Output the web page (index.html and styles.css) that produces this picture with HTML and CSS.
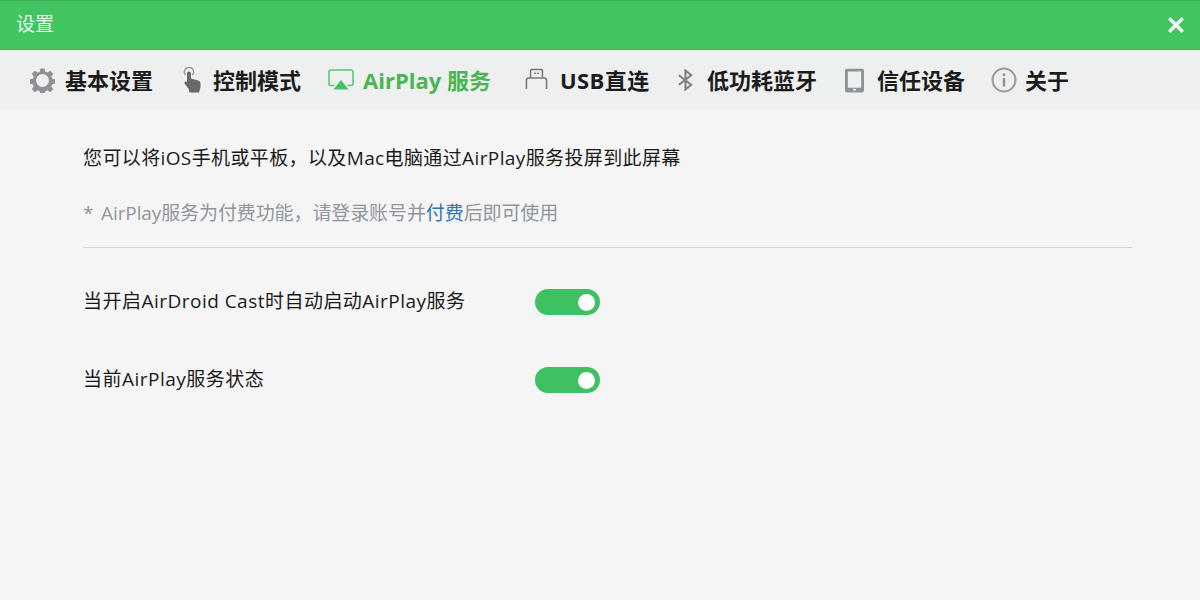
FILE: index.html
```html
<!DOCTYPE html>
<html lang="zh-CN">
<head>
<meta charset="utf-8">
<title>设置</title>
<link rel="stylesheet" href="styles.css">
</head>
<body>
<div class="window">
  <header class="titlebar">
    <span class="title">设置</span>
    <svg class="close" viewBox="0 0 16 16"><path d="M2 2L14 14M14 2L2 14"/></svg>
  </header>
  <nav class="tabs">
    <a class="tab tab-basic">
      <svg class="icon icon-gear" viewBox="0 0 26 26"><path class="fill-grey" fill-rule="evenodd" d="M10.800 .5h4.400l.7 3.400 2.100.9 3-1.900 3.100 3.100-1.900 3 .9 2.100 3.400.7v4.400l-3.400.7-.9 2.100 1.900 3-3.100 3.100-3-1.900-2.100.9-.7 3.400h-4.400l-.7-3.400-2.100-.9-3 1.900-3.100-3.100 1.900-3-.9-2.100-3.400-.7v-4.400l3.400-.7.9-2.100-1.900-3 3.100-3.100 3 1.900 2.100-.9zM13 6.300a6.700 6.700 0 1 0 0 13.400a6.700 6.700 0 0 0 0-13.400z"/></svg>
      <span>基本设置</span>
    </a>
    <a class="tab tab-control">
      <svg class="icon icon-hand" viewBox="0 0 20 26"><path class="stroke-soft" d="M3.600 8a4.600 4.600 0 1 1 6.800 0"/><path class="fill-dark" d="M5 6.500a2 2 0 0 1 4 0v5l6.500 1.800c1.900.5 3 1.700 3 3.500v3.700l-1.500 5H7.500l-1-3.800-3.800-5c-.9-1.400.8-2.900 2-1.800l.3.300z"/></svg>
      <span>控制模式</span>
    </a>
    <a class="tab tab-airplay active">
      <svg class="icon icon-airplay" viewBox="0 0 26 22"><path class="stroke-green" d="M6.500 16.500H3a2 2 0 0 1-2-2V3a2 2 0 0 1 2-2h20a2 2 0 0 1 2 2v11.500a2 2 0 0 1-2 2h-3.500"/><path class="fill-green" d="M13 11l7.500 9.500h-15z"/></svg>
      <span>AirPlay 服务</span>
    </a>
    <a class="tab tab-usb">
      <svg class="icon icon-usb" viewBox="0 0 24 22"><path class="stroke-thin" d="M1.500 21.500V12.500q0-2.500 2.500-2.500h16q2.500 0 2.500 2.500v9M5.800 10V2q0-1 1-1h10.400q1 0 1 1v8"/><path class="stroke-thin" d="M9.500 5h1.800M12.700 5h1.800"/></svg>
      <span>USB直连</span>
    </a>
    <a class="tab tab-bt">
      <svg class="icon icon-bt" viewBox="0 0 18 22"><path class="stroke-grey" d="M2 6l13 10-6 5V1l6 5L2 16"/></svg>
      <span>低功耗蓝牙</span>
    </a>
    <a class="tab tab-device">
      <svg class="icon icon-tablet" viewBox="0 0 20 25"><path class="fill-slate" fill-rule="evenodd" d="M2 0h16a2 2 0 0 1 2 2v21a2 2 0 0 1-2 2H2a2 2 0 0 1-2-2V2a2 2 0 0 1 2-2zM3 3v17h14V3zM8.500 21.200v1.800h3v-1.800z"/></svg>
      <span>信任设备</span>
    </a>
    <a class="tab tab-about">
      <svg class="icon icon-info" viewBox="0 0 26 26"><circle class="stroke-ring" cx="13" cy="13" r="11.500"/><circle class="dot" cx="13" cy="7.800" r="1.500"/><path class="fill-slate" d="M11.800 11h2.400v8.500h-2.400z"/></svg>
      <span>关于</span>
    </a>
  </nav>
  <main class="content">
    <p class="intro">您可以将iOS手机或平板，以及Mac电脑通过AirPlay服务投屏到此屏幕</p>
    <p class="note">*&nbsp; AirPlay服务为付费功能，请登录账号并<a class="link">付费</a>后即可使用</p>
    <hr class="divider">
    <div class="row row-first">
      <span class="label">当开启AirDroid Cast时自动启动AirPlay服务</span>
      <span class="switch"><span class="knob"></span></span>
    </div>
    <div class="row">
      <span class="label">当前AirPlay服务状态</span>
      <span class="switch"><span class="knob"></span></span>
    </div>
  </main>
</div>
</body>
</html>
```
FILE: styles.css
```css
* { box-sizing: border-box; }
html, body { margin: 0; padding: 0; }
body {
  width: 1200px;
  height: 600px;
  overflow: hidden;
  font-family: "Open Sans", "Noto Sans CJK SC", sans-serif;
  background: #f5f5f5;
}
.window { display: flex; flex-direction: column; height: 600px; }

.titlebar {
  height: 50px;
  flex: none;
  display: flex;
  align-items: center;
  justify-content: space-between;
  padding: 0 15px 0 16px;
  background: #43c463;
  border-top: 1px solid #3bb357;
  border-bottom: 1px solid #3fb55c;
}
.title { font-size: 19px; color: #e6f8ea; position: relative; top: -2px; }
.close { width: 18px; height: 18px; }
.close path { fill: none; stroke: #f4fbf5; stroke-width: 3; }

.tabs {
  height: 60px;
  flex: none;
  display: flex;
  align-items: center;
  padding-left: 30px;
  background: #eeefef;
}
.tab {
  display: flex;
  align-items: center;
  font-size: 22px;
  font-weight: 700;
  color: #1c1c1c;
  white-space: nowrap;
}
.tab span {
  display: block;
  width: 88px;
  margin-top: -2px;
}
.tab-airplay span { width: 129px; }
.tab-usb span { width: 89px; letter-spacing: .4px; }
.tab-bt span { width: 110px; }
.tab-about span { width: 45px; }
.tab-basic { margin-right: 29px; }
.tab-control { margin-right: 27px; }
.tab-airplay { margin-right: 33px; }
.tab-usb { margin-right: 28px; }
.tab-bt { margin-right: 28px; }
.tab-device { margin-right: 26px; }
.active { color: #4ab552; }

.icon { display: block; flex: none; }
.icon-gear { width: 25px; height: 25px; margin-right: 10px; }
.icon-hand { width: 20px; height: 26px; margin-right: 11px; }
.icon-airplay { width: 26px; height: 22px; margin-right: 9px; }
.icon-usb { width: 23px; height: 22px; margin-right: 12px; position: relative; top: -1px; }
.icon-bt { width: 17px; height: 22px; margin-right: 13px; }
.icon-tablet { width: 19px; height: 25px; margin-right: 13px; }
.icon-info { width: 26px; height: 26px; margin-right: 8px; }

.fill-grey { fill: #8f9294; }
.fill-dark { fill: #68696b; }
.fill-green { fill: #45c163; }
.fill-slate { fill: #8b9598; }
.stroke-grey { fill: none; stroke: #7d8082; stroke-width: 2.200; }
.stroke-soft { fill: none; stroke: #9a9c9e; stroke-width: 1.600; }
.stroke-thin { fill: none; stroke: #77797b; stroke-width: 1.600; }
.stroke-ring { fill: none; stroke: #9a9d9f; stroke-width: 2; }
.stroke-green { fill: none; stroke: #5cc676; stroke-width: 1.600; }
.dot { fill: #8b9598; }

.content { flex: 1; padding: 0 68px 0 83px; }
.intro {
  margin: 35px 0 0;
  font-size: 19px;
  line-height: 26px;
  letter-spacing: .38px;
  color: #1a1a1a;
}
.note {
  margin: 29px 0 0;
  font-size: 19px;
  line-height: 26px;
  letter-spacing: -.1px;
  word-spacing: -1px;
  color: #8f969e;
}
.link { color: #2f74b5; }
.divider {
  margin: 21px 0 0;
  border: 0;
  border-top: 1px solid #d6d7d7;
}
.row {
  display: flex;
  align-items: center;
  height: 30px;
  margin-top: 48px;
}
.row-first { margin-top: 39px; }
.label {
  width: 452px;
  padding-bottom: 2px;
  font-size: 19px;
  line-height: 26px;
  letter-spacing: .48px;
  color: #1a1a1a;
}
.switch {
  width: 65px;
  height: 26px;
  padding: 5px 5px 4px 0;
  display: flex;
  justify-content: flex-end;
  border-radius: 13px;
  background: #3fc163;
}
.knob {
  width: 17px;
  height: 17px;
  border-radius: 50%;
  background: #fff;
}
```
